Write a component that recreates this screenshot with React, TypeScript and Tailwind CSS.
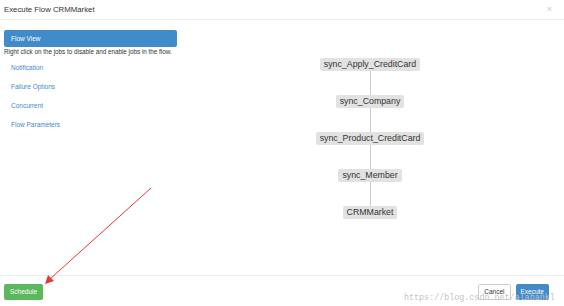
import React from "react";

const menu = ["Notification", "Failure Options", "Concurrent", "Flow Parameters"];
const jobs = ["sync_Apply_CreditCard", "sync_Company", "sync_Product_CreditCard", "sync_Member", "CRMMarket"];

export default function App() {
  return (
    <div
      className="relative w-[564px] h-[306px] bg-white text-[#333] flex flex-col overflow-hidden"
      style={{ fontFamily: '"Liberation Sans", Arial, sans-serif' }}
    >
      {/* header */}
      <div className="h-[20px] border-b border-[#eee] flex items-center justify-between pl-[4px] pr-[12px]">
        <span className="text-[7.8px] text-[#333]">Execute Flow CRMMarket</span>
        <span className="text-[9px] text-[#ccc] leading-none">×</span>
      </div>

      {/* body */}
      <div className="flex-1 flex">
        <div className="w-[180px] pl-[4px] pt-[10px]">
          <div className="h-[17px] w-[173px] rounded-[2px] bg-[#428bca] text-white text-[6.5px] flex items-center pl-[7px]">
            Flow View
          </div>
          <div className="text-[6.3px] leading-[8px] text-[#333] mt-[1px] whitespace-nowrap">
            Right click on the jobs to disable and enable jobs in the flow.
          </div>
          <div className="flex flex-col gap-[11px] pl-[7px] mt-[8px]">
            {menu.map((m) => (
              <div key={m} className="text-[6.5px] leading-[8px] text-[#428bca]">
                {m}
              </div>
            ))}
          </div>
        </div>
        <div className="flex-1 flex flex-col items-center pt-[38px] pr-[4px]">
          {jobs.map((j, i) => (
            <React.Fragment key={j}>
              {i > 0 && <div className="w-px h-[24px] bg-[#ccc]" />}
              <div className="h-[13px] px-[4px] rounded-[2px] bg-[#e2e2e2] text-[8.8px] text-[#333] flex items-center whitespace-nowrap">
                {j}
              </div>
            </React.Fragment>
          ))}
        </div>
      </div>

      {/* footer */}
      <div className="h-[31px] border-t border-[#eee] flex items-center justify-between pl-[4px] pr-[15px] pt-[1px]">
        <button className="h-[16px] px-[6px] rounded-[2px] bg-[#5cb85c] text-white text-[6.5px]">Schedule</button>
        <div className="flex gap-[5px]">
          <button className="h-[16px] px-[5px] rounded-[2px] bg-white border border-[#ccc] text-[#333] text-[6.5px]">
            Cancel
          </button>
          <button className="h-[16px] px-[5px] rounded-[2px] bg-[#428bca] text-white text-[6.5px]">Execute</button>
        </div>
      </div>

      {/* watermark */}
      <div
        className="absolute left-[404px] top-[292px] text-[8.4px] text-[#c4c4c4] whitespace-nowrap"
        style={{ fontFamily: '"Liberation Mono", monospace' }}
      >
        https://blog.csdn.net/alabankl
      </div>

      {/* red annotation arrow */}
      <svg className="absolute left-0 top-0 pointer-events-none" width="564" height="306">
        <line x1="151" y1="188" x2="50" y2="279" stroke="#e53935" strokeWidth="1" />
        <polygon points="45,284 48,275 54,281" fill="#e53935" />
      </svg>
    </div>
  );
}
